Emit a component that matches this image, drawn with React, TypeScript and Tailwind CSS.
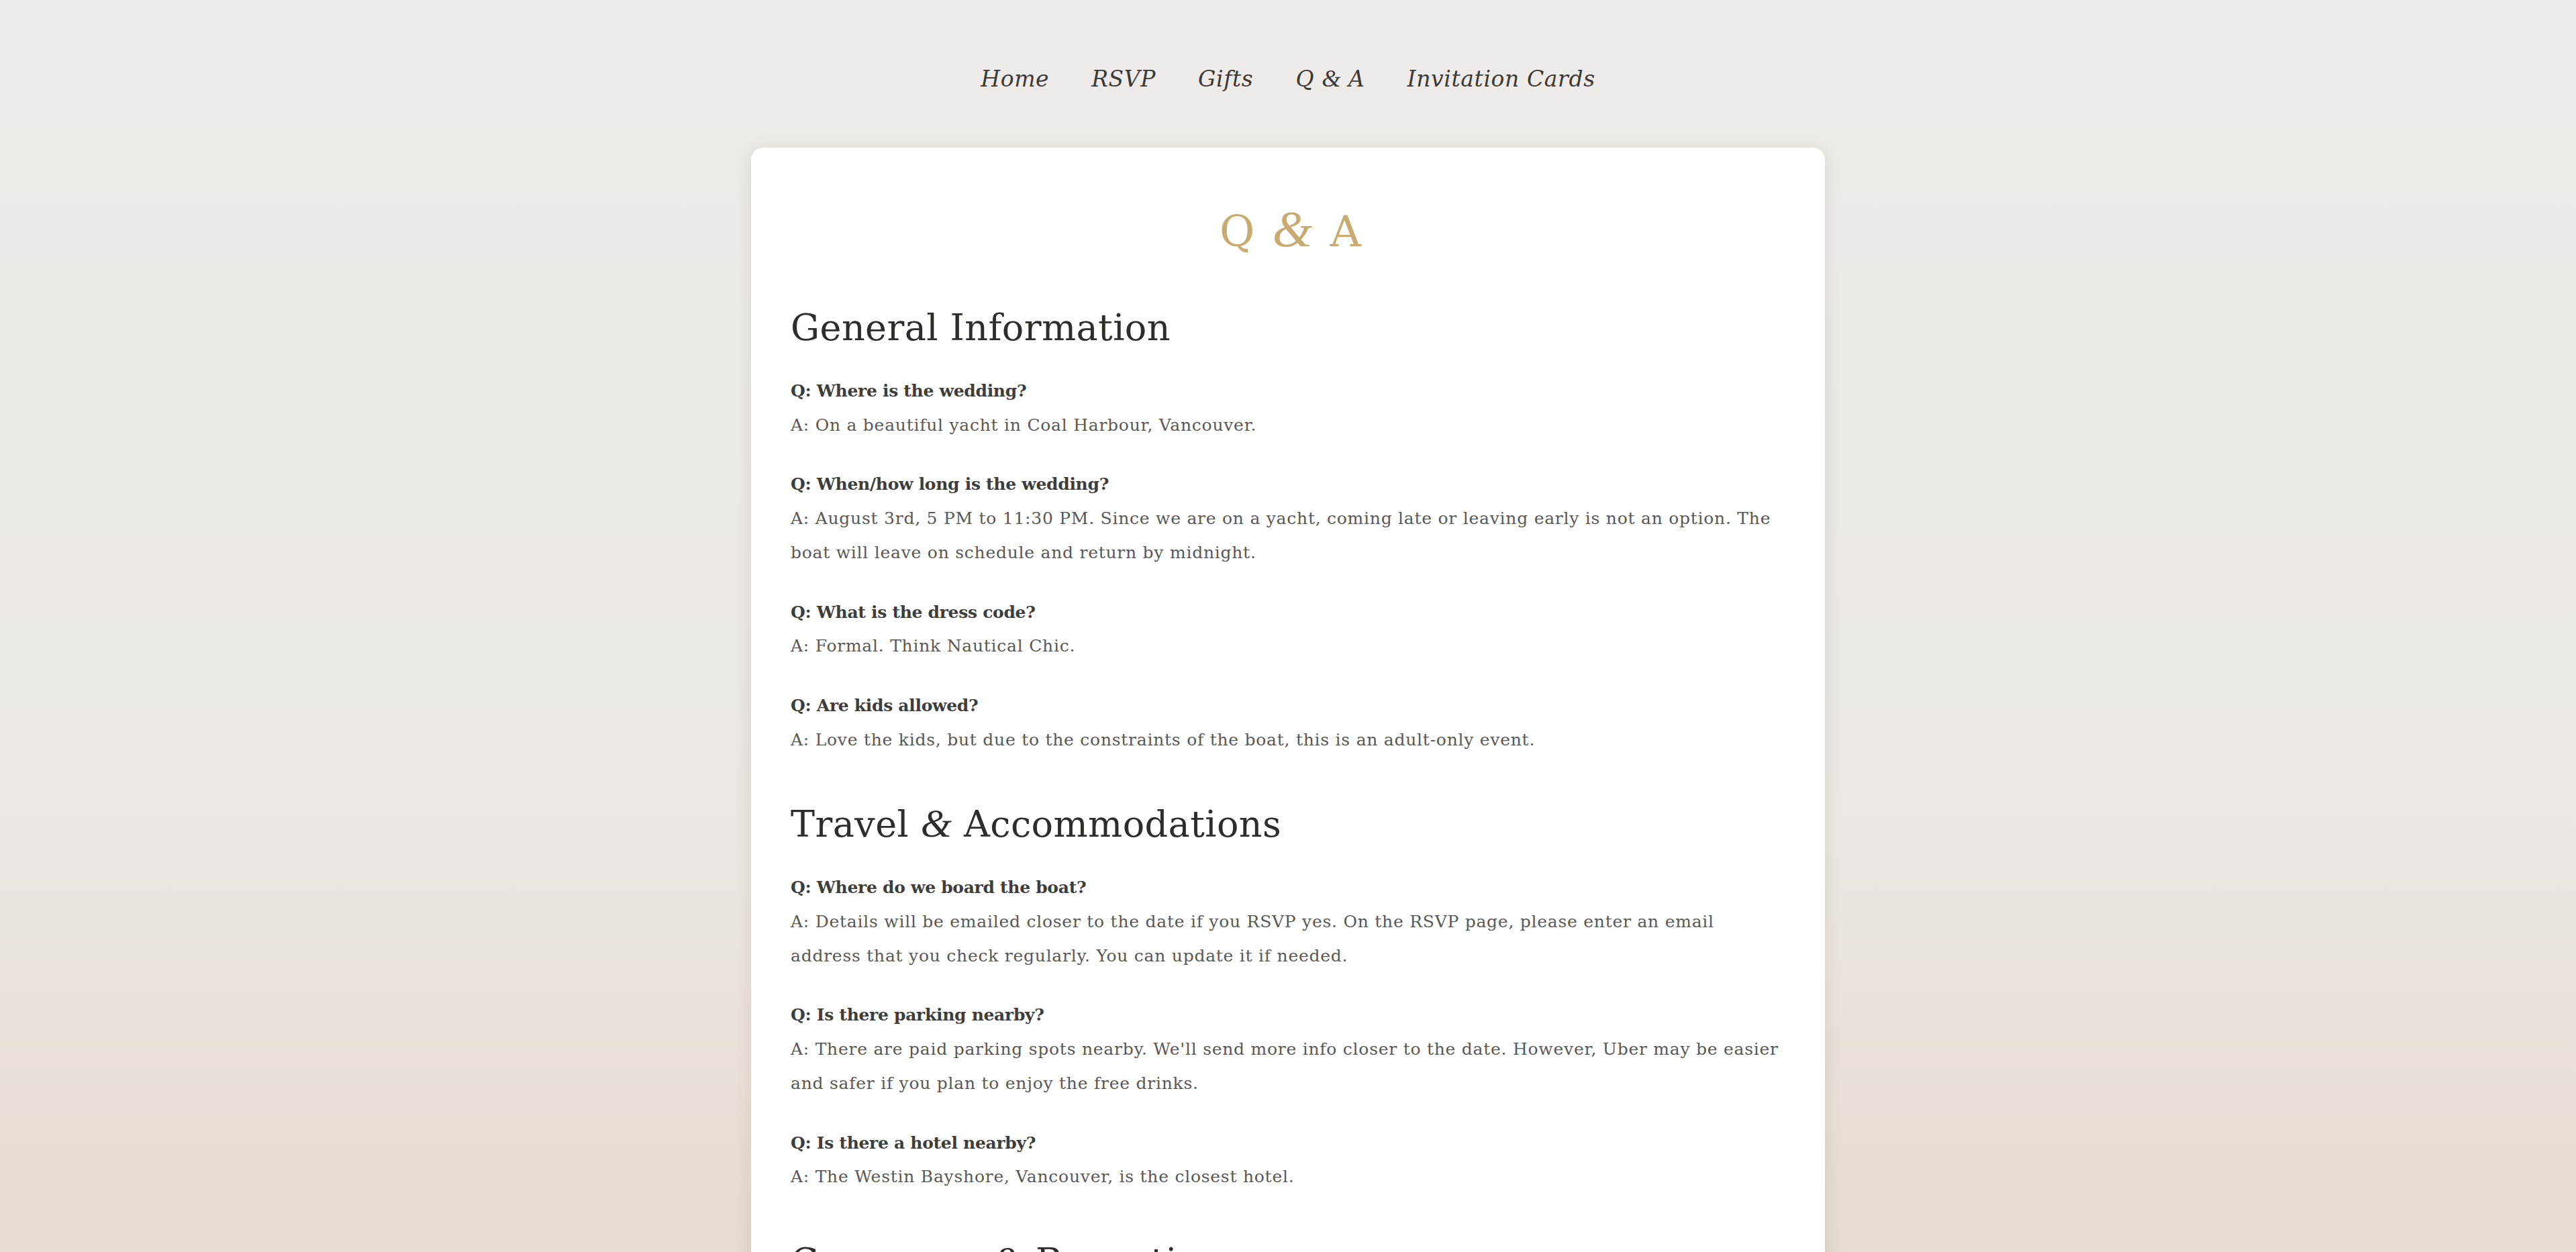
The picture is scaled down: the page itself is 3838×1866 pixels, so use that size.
const navLinks = ['Home', 'RSVP', 'Gifts', 'Q & A', 'Invitation Cards'];

type QA = { q: string; a: string };

const sections: { title: string; items: QA[] }[] = [
  {
    title: 'General Information',
    items: [
      { q: 'Where is the wedding?', a: 'On a beautiful yacht in Coal Harbour, Vancouver.' },
      {
        q: 'When/how long is the wedding?',
        a: 'August 3rd, 5 PM to 11:30 PM. Since we are on a yacht, coming late or leaving early is not an option. The boat will leave on schedule and return by midnight.',
      },
      { q: 'What is the dress code?', a: 'Formal. Think Nautical Chic.' },
      { q: 'Are kids allowed?', a: 'Love the kids, but due to the constraints of the boat, this is an adult-only event.' },
    ],
  },
  {
    title: 'Travel & Accommodations',
    items: [
      {
        q: 'Where do we board the boat?',
        a: 'Details will be emailed closer to the date if you RSVP yes. On the RSVP page, please enter an email address that you check regularly. You can update it if needed.',
      },
      {
        q: 'Is there parking nearby?',
        a: "There are paid parking spots nearby. We'll send more info closer to the date. However, Uber may be easier and safer if you plan to enjoy the free drinks.",
      },
      { q: 'Is there a hotel nearby?', a: 'The Westin Bayshore, Vancouver, is the closest hotel.' },
    ],
  },
  {
    title: 'Ceremony & Reception',
    items: [
      { q: 'Will there be food and drinks?', a: 'Yes! Dinner and an open bar will be served on board.' },
      { q: 'Can I bring a plus one?', a: 'Only if your invitation includes one. Please check your RSVP.' },
    ],
  },
];

// fancy italic ampersand, like the reference's display face
function WithAmp({ text, big = false }: { text: string; big?: boolean }) {
  const parts = text.split('&');
  return (
    <>
      {parts.map((p, i) => (
        <span key={i}>
          {p}
          {i < parts.length - 1 && (
            <span className={big ? "mx-[6px] font-['Liberation_Serif',serif] text-[1.2em] italic" : "font-['Liberation_Serif',serif] text-[1.1em] italic"}>
              &amp;
            </span>
          )}
        </span>
      ))}
    </>
  );
}

export default function App() {
  return (
    <div className="h-screen overflow-hidden bg-linear-to-b from-[#eeebe8] via-[#ebe6e1] via-70% to-[#e5dbce] font-['DejaVu_Serif',serif]">
      <nav className="flex justify-center gap-[63px] pt-[101px] pb-[86px] text-[33px] leading-[33px] tracking-[0.6px] italic text-[#3b3a37]">
        {navLinks.map((l) => (
          <a key={l} href="#" className="hover:text-[#c9ab72]">
            <WithAmp text={l} />
          </a>
        ))}
      </nav>

      <main className="mx-auto w-[1600px] rounded-[18px] bg-white pt-[90px] pr-[52px] pb-[80px] pl-[59px] shadow-[0_4px_24px_rgba(60,40,20,0.10)]">
        <h1 className="text-center text-[64px] leading-[64px] text-[#c9ab72]">
          <WithAmp text="Q & A" big />
        </h1>

        {sections.map((s, si) => (
          <section key={s.title} className={si === 0 ? 'mt-[86px]' : 'mt-[73px]'}>
            <h2 className="text-[54px] leading-[52px] tracking-[0.4px] text-[#2c2e29]">
              <WithAmp text={s.title} />
            </h2>
            <div className="mt-[43px] flex flex-col gap-[38px]">
              {s.items.map((it) => (
                <div key={it.q} className="text-[25px] leading-[50.7px]">
                  <p className="font-bold tracking-[-0.3px] text-[#3d3d3b]">Q: {it.q}</p>
                  <p className="tracking-[0.75px] text-[#595855]">A: {it.a}</p>
                </div>
              ))}
            </div>
          </section>
        ))}
      </main>
    </div>
  );
}
